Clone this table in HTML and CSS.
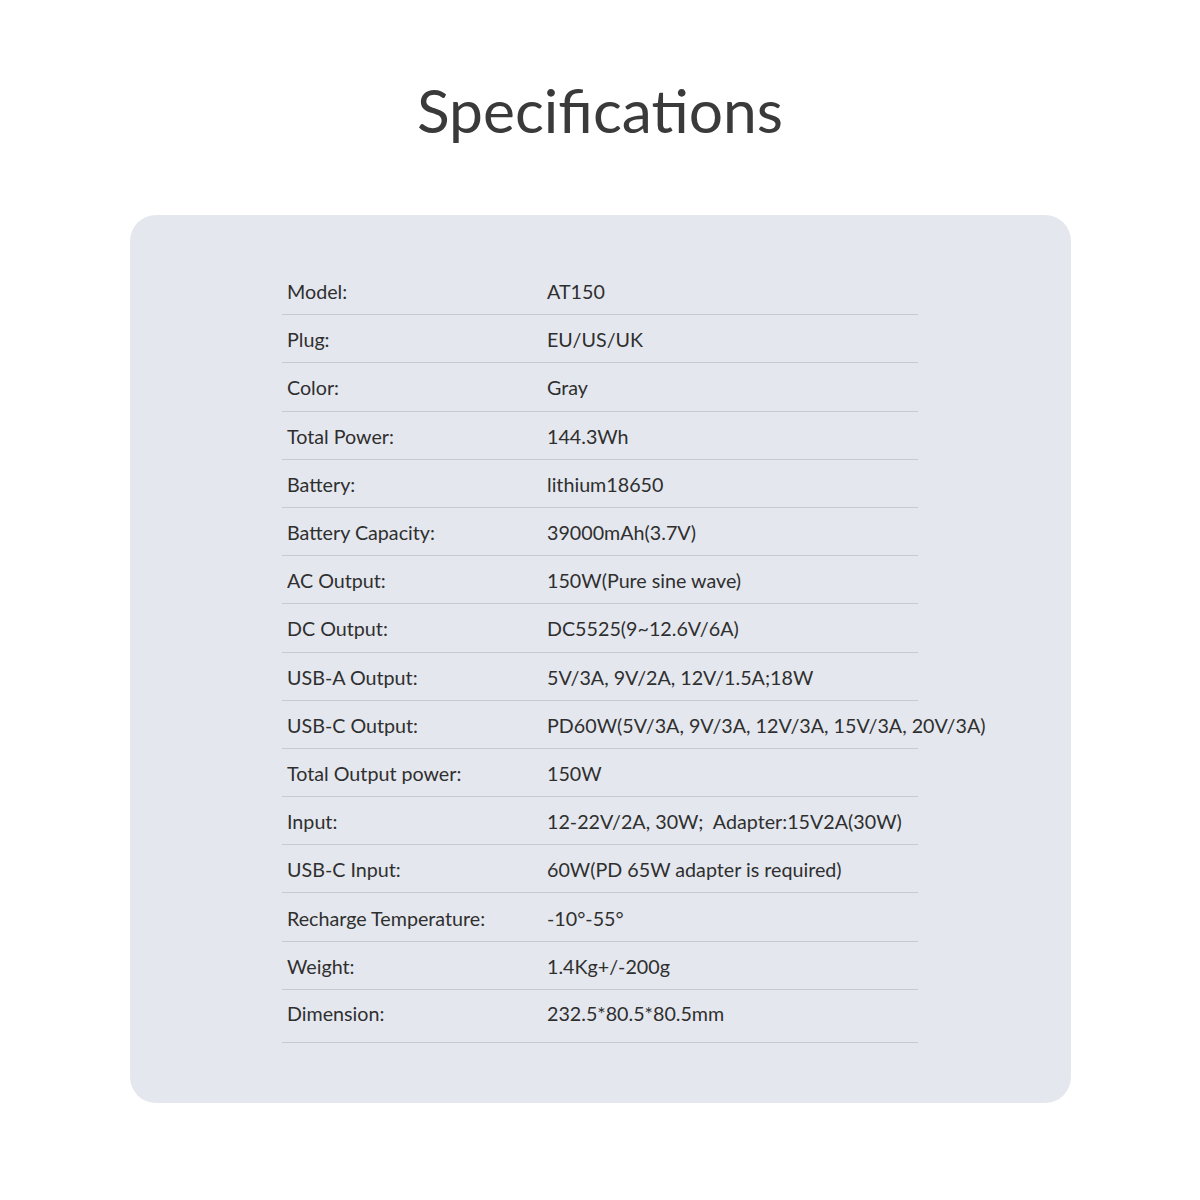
FILE: index.html
```html
<!DOCTYPE html>
<html>
<head>
<meta charset="utf-8">
<link rel="stylesheet" href="styles.css">
</head>
<body>
<main class="page">
  <h1 class="title">Specifications</h1>
  <section class="card">
    <div class="specs">
      <div class="row"><span class="label">Model:</span><span class="value">AT150</span></div>
      <div class="row"><span class="label">Plug:</span><span class="value">EU/US/UK</span></div>
      <div class="row"><span class="label">Color:</span><span class="value">Gray</span></div>
      <div class="row"><span class="label">Total Power:</span><span class="value">144.3Wh</span></div>
      <div class="row"><span class="label">Battery:</span><span class="value">lithium18650</span></div>
      <div class="row"><span class="label">Battery Capacity:</span><span class="value">39000mAh(3.7V)</span></div>
      <div class="row"><span class="label">AC Output:</span><span class="value">150W(Pure sine wave)</span></div>
      <div class="row"><span class="label">DC Output:</span><span class="value">DC5525(9~12.6V/6A)</span></div>
      <div class="row"><span class="label">USB-A Output:</span><span class="value">5V/3A, 9V/2A, 12V/1.5A;18W</span></div>
      <div class="row"><span class="label">USB-C Output:</span><span class="value">PD60W(5V/3A, 9V/3A, 12V/3A, 15V/3A, 20V/3A)</span></div>
      <div class="row"><span class="label">Total Output power:</span><span class="value">150W</span></div>
      <div class="row"><span class="label">Input:</span><span class="value">12-22V/2A, 30W;&nbsp; Adapter:15V2A(30W)</span></div>
      <div class="row"><span class="label">USB-C Input:</span><span class="value">60W(PD 65W adapter is required)</span></div>
      <div class="row"><span class="label">Recharge Temperature:</span><span class="value">-10°-55°</span></div>
      <div class="row"><span class="label">Weight:</span><span class="value">1.4Kg+/-200g</span></div>
      <div class="row last"><span class="label">Dimension:</span><span class="value">232.5*80.5*80.5mm</span></div>
    </div>
  </section>
</main>
</body>
</html>
```

FILE: styles.css
```css
* { box-sizing: border-box; }
html, body { margin: 0; padding: 0; background: #ffffff; }
body { font-family: Lato, "Open Sans", sans-serif; color: #333333; }
.page {
  width: 1200px;
  padding-top: 72px;
  display: flex;
  flex-direction: column;
  align-items: center;
}
.title {
  margin: 0;
  font-weight: 400;
  font-size: 60.5px;
  line-height: 76px;
  color: #3a3a3a;
  letter-spacing: 0;
}
.card {
  margin-top: 67px;
  width: 941px;
  height: 888px;
  margin-left: 1px;
  background: #e4e7ee;
  border-radius: 26px;
  padding: 52px 0 0 152px;
}
.specs {
  width: 636px;
  display: flex;
  flex-direction: column;
}
.row {
  display: flex;
  height: 48.2px;
  align-items: center;
  border-bottom: 1px solid #c6cad1;
  padding-left: 5px;
  padding-top: 2px;
  font-size: 19.7px;
  white-space: nowrap;
  color: #2f2f2f;
}
.row.last {
  height: 53px;
  padding-bottom: 6px;
}
.label { width: 260px; flex: none; }
.value { flex: none; }
```
